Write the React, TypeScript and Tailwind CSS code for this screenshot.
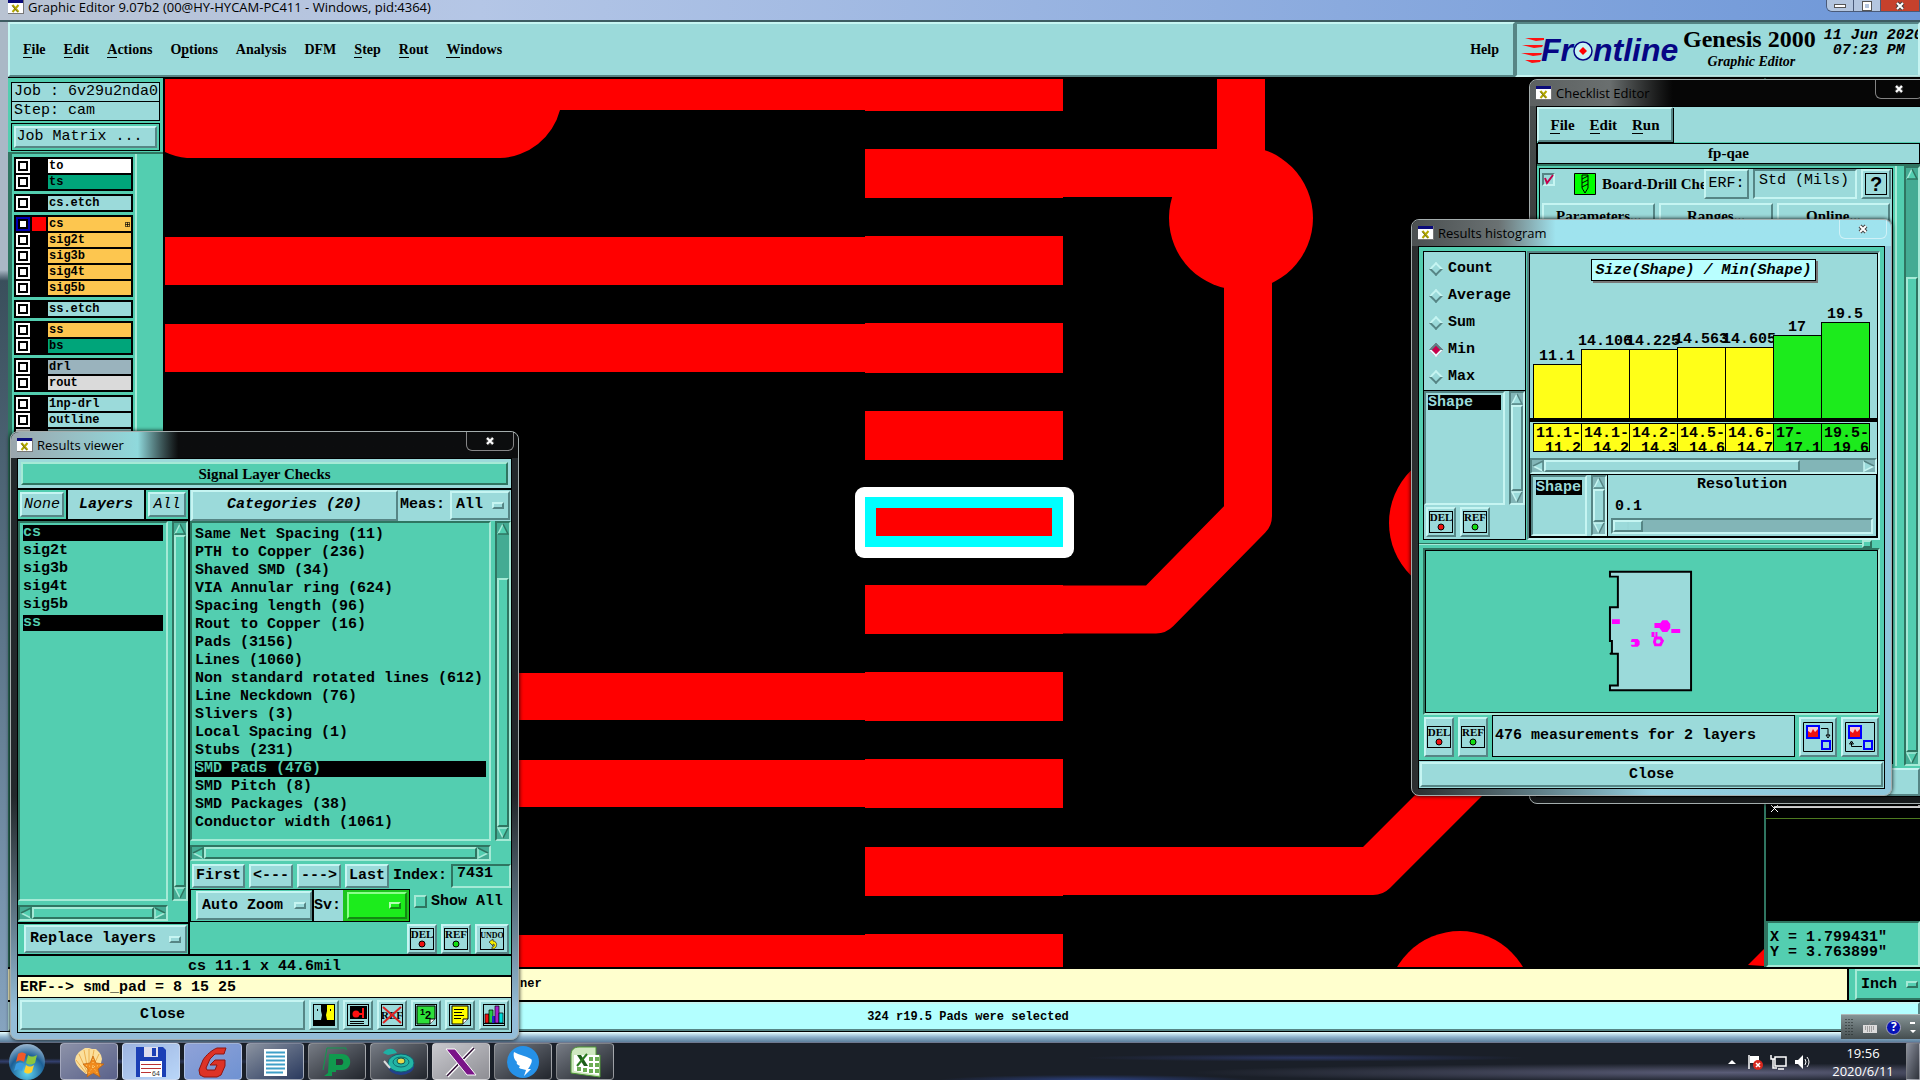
import type { ReactNode } from 'react'
import { clsx } from 'clsx'

const raised = 'border-2 border-t-[#c6f5f2] border-l-[#c6f5f2] border-r-[#568585] border-b-[#568585]'
const sunken = 'border-2 border-t-[#568585] border-l-[#568585] border-r-[#c6f5f2] border-b-[#c6f5f2]'
const raisedGreen = 'border-2 border-t-[#a5ead6] border-l-[#a5ead6] border-r-[#2f7561] border-b-[#2f7561]'
const sunkenGreen = 'border-2 border-t-[#2f7561] border-l-[#2f7561] border-r-[#a5ead6] border-b-[#a5ead6]'

const mono = "font-['Liberation_Mono',monospace] text-[15px] leading-[18px] font-bold"
const serif = "font-['Liberation_Serif',serif] text-[15px] leading-[18px] font-bold"
const ui = "font-['Open_Sans','Noto_Sans',sans-serif]"

const menus = [
  { label: 'File', key: 0 },
  { label: 'Edit', key: 0 },
  { label: 'Actions', key: 0 },
  { label: 'Options', key: 1 },
  { label: 'Analysis', key: -1 },
  { label: 'DFM', key: -1 },
  { label: 'Step', key: 0 },
  { label: 'Rout', key: 0 },
  { label: 'Windows', key: 0 }
]

const layerGroups = [
  [
    { name: 'to', color: 'bg-white' },
    { name: 'ts', color: 'bg-[#00a57a]' }
  ],
  [{ name: 'cs.etch', color: 'bg-[#9bdada]' }],
  [
    { name: 'cs', color: 'bg-[#fdc64f]', active: true },
    { name: 'sig2t', color: 'bg-[#fdc64f]' },
    { name: 'sig3b', color: 'bg-[#fdc64f]' },
    { name: 'sig4t', color: 'bg-[#fdc64f]' },
    { name: 'sig5b', color: 'bg-[#fdc64f]' }
  ],
  [{ name: 'ss.etch', color: 'bg-[#9bdada]' }],
  [
    { name: 'ss', color: 'bg-[#fdc64f]' },
    { name: 'bs', color: 'bg-[#00a57a]' }
  ],
  [
    { name: 'drl', color: 'bg-[#9ab3bd]' },
    { name: 'rout', color: 'bg-[#dadada]' }
  ],
  [
    { name: '1np-drl', color: 'bg-[#9bdada]' },
    { name: 'outline', color: 'bg-[#9bdada]' },
    { name: '', color: 'bg-[#9bdada]' }
  ]
]

const resultLayers = ['cs', 'sig2t', 'sig3b', 'sig4t', 'sig5b', 'ss']

const categories = [
  'Same Net Spacing (11)',
  'PTH to Copper (236)',
  'Shaved SMD (34)',
  'VIA Annular ring (624)',
  'Spacing length (96)',
  'Rout to Copper (16)',
  'Pads (3156)',
  'Lines (1060)',
  'Non standard rotated lines (612)',
  'Line Neckdown (76)',
  'Slivers (3)',
  'Local Spacing (1)',
  'Stubs (231)',
  'SMD Pads (476)',
  'SMD Pitch (8)',
  'SMD Packages (38)',
  'Conductor width (1061)'
]

const bars = [
  { value: '11.1', from: '11.1-', to: '11.2', height: 54, ok: false },
  { value: '14.106', from: '14.1-', to: '14.2', height: 69, ok: false },
  { value: '14.225', from: '14.2-', to: '14.3', height: 69, ok: false },
  { value: '14.563', from: '14.5-', to: '14.6', height: 71, ok: false },
  { value: '14.605', from: '14.6-', to: '14.7', height: 71, ok: false },
  { value: '17', from: '17-', to: '17.1', height: 83, ok: true },
  { value: '19.5', from: '19.5-', to: '19.6', height: 96, ok: true }
]

function MenuLabel({ label, hotkey }: { label: string; hotkey: number }) {
  if (hotkey < 0) return <>{label}</>
  return (
    <>
      {label.slice(0, hotkey)}
      <span className="border-b border-black">{label[hotkey]}</span>
      {label.slice(hotkey + 1)}
    </>
  )
}

function XIcon() {
  return (
    <svg viewBox="0 0 16 14" className="h-[14px] w-4 shrink-0" aria-hidden="true">
      <rect width="16" height="14" fill="#777" />
      <rect width="15" height="13" fill="#fff" />
      <rect width="15" height="3" fill="#0b0b7a" />
      <path d="M4.5 5l6 7M10.5 5l-6 7" stroke="#b3a800" strokeWidth="2" fill="none" />
      <path d="M4 5.500l5.5 6.5" stroke="#333" strokeWidth=".5" />
    </svg>
  )
}

function ScrollBar({
  horizontal,
  tone,
  before = 0,
  thumb = 1,
  after = 0
}: {
  horizontal?: boolean
  tone: 'green' | 'cyan'
  before?: number
  thumb?: number
  after?: number
}) {
  const green = tone === 'green'
  const fill = green ? '#53ceb0' : '#9bdada'
  const light = green ? '#a5ead6' : '#c6f5f2'
  const dark = green ? '#2f7561' : '#568585'
  const arrow = (end: boolean) => (
    <svg
      viewBox="0 0 12 12"
      className={clsx('h-3 w-3 shrink-0', horizontal && '-rotate-90')}
      aria-hidden="true"
    >
      {end ? (
        <>
          <path d="M1 1h10L6 11z" fill={fill} />
          <path d="M11 1H1l5 10" fill="none" stroke={light} strokeWidth="1.5" />
          <path d="M6 11 11 1" stroke={dark} strokeWidth="1.5" />
        </>
      ) : (
        <>
          <path d="M6 1 11 11H1z" fill={fill} />
          <path d="M6 1 1 11" stroke={light} strokeWidth="1.5" />
          <path d="M6 1l5 10H1" fill="none" stroke={dark} strokeWidth="1.5" />
        </>
      )}
    </svg>
  )
  return (
    <div
      className={clsx(
        'flex shrink-0 border-2',
        green ? 'bg-[#44ab93]' : 'bg-[#82b5b7]',
        green ? sunkenGreen : sunken,
        horizontal ? 'h-4 flex-row' : 'w-4 flex-col'
      )}
    >
      {arrow(false)}
      <div style={{ flexGrow: before }} />
      <div
        className={clsx(green ? 'bg-[#53ceb0]' : 'bg-[#9bdada]', green ? raisedGreen : raised)}
        style={{ flexGrow: thumb }}
      />
      <div style={{ flexGrow: after }} />
      {arrow(true)}
    </div>
  )
}

function OptionMenu({ label, value, className, green }: { label: string; value: string; className?: string; green?: boolean }) {
  return (
    <div className={clsx('relative flex items-center', green ? 'border-2' : raised, className)}>
      <select aria-label={label} className="h-full w-full appearance-none bg-transparent pl-1 outline-none">
        <option>{value}</option>
      </select>
      <span
        className={clsx(
          'pointer-events-none absolute right-1 h-[7px] w-3',
          green ? 'border-2 border-t-[#b5ffb5] border-l-[#b5ffb5] border-r-[#138a13] border-b-[#138a13]' : raised
        )}
      />
    </div>
  )
}

function BevelButton({ children, className, label }: { children: ReactNode; className?: string; label?: string }) {
  return (
    <button
      type="button"
      aria-label={label}
      className={clsx('flex items-center justify-center bg-[#9bdada] whitespace-nowrap', raised, className)}
    >
      {children}
    </button>
  )
}

function TagIcon({ text, dot }: { text: string; dot: string }) {
  const undo = text === 'UNDO'
  return (
    <svg viewBox="0 0 26 24" className="h-6 w-[26px] shrink-0" aria-hidden="true">
      <rect x="1.5" y="1.5" width="23" height="21" fill="none" stroke="#000" />
      <text x="13" y="11" textAnchor="middle" fontFamily="Liberation Serif, serif" fontSize={undo ? 8 : 11}>
        {text}
      </text>
      {undo ? (
        <>
          <path d="M10 15l4-3v2c5 0 5 8-1 8v-2c3 0 3-3 1-3v2z" fill="#f5ee00" stroke="#222" strokeWidth=".7" />
        </>
      ) : (
        <circle cx="13" cy="17" r="3" fill={dot} stroke="#000" />
      )}
    </svg>
  )
}

function CloseGlyph() {
  return (
    <svg viewBox="0 0 12 10" className="h-[10px] w-3" aria-hidden="true">
      <path d="M3 2l6 6M9 2L3 8" stroke="#444" strokeWidth="4" />
      <path d="M3 2l6 6M9 2L3 8" stroke="#fff" strokeWidth="2" />
    </svg>
  )
}

function Header() {
  return (
    <header className="ml-2 flex h-14 shrink-0 border-b border-black bg-[#9bdada]">
      <nav
        className={clsx(
          "flex flex-1 items-center gap-[18px] pr-[14px] pl-[13px] font-['Liberation_Serif',serif] text-sm leading-4 font-bold",
          raised
        )}
      >
        {menus.map((m) => (
          <button key={m.label} type="button">
            <MenuLabel label={m.label} hotkey={m.key} />
          </button>
        ))}
        <button type="button" className="ml-auto">
          Help
        </button>
      </nav>
      <div className={clsx('flex w-[405px] overflow-hidden pl-1', sunken)}>
        <svg viewBox="0 0 162 52" className="h-[52px] w-[162px] shrink-0" role="img" aria-label="Frontline">
          <path d="M4 14h19v2l-8 1zM1 21h21l-1 2-8 1zM0 29h21l-1 2-8 1zM4 36h16l-1 2-8 1z" fill="#f11" />
          <g fill="#060684" fontFamily="Liberation Sans, sans-serif" fontSize="32" fontWeight="700" fontStyle="italic">
            <text x="20" y="37">Fr</text>
            <text x="72" y="37">ntline</text>
          </g>
          <circle cx="62" cy="27" r="9" fill="#c8f4f4" stroke="#060684" strokeWidth="1.5" />
          <path d="M62 23l4 4-4 4-4-4z" fill="#f00" />
        </svg>
        <div className="flex shrink-0 flex-col items-center font-['Liberation_Serif',serif] font-bold">
          <h1 className="text-[24px] leading-[30px]">Genesis 2000</h1>
          <p className="pl-1 text-sm leading-4 italic">Graphic Editor</p>
        </div>
        <div className={clsx('ml-2 shrink-0 pt-1 whitespace-pre italic', mono)}>
          <p className="leading-[15px]">11 Jun 2020</p>
          <p className="leading-[15px]"> 07:23 PM</p>
        </div>
      </div>
    </header>
  )
}

function LayerPanel() {
  return (
    <aside className="w-[157px] shrink-0 overflow-hidden border-r-2 border-black bg-[#53ceb0] pt-1">
      <div className="mx-[3px] font-['Liberation_Mono',monospace] text-[15px] leading-[18px] whitespace-pre">
        <p className="border border-black bg-[#9bdada] px-[2px]">Job : 6v29u2nda0</p>
        <p className="border border-t-0 border-black bg-[#9bdada] px-[2px]">Step: cam</p>
        <div className="mt-[2px] border border-black p-[2px]">
          <BevelButton className="h-[22px] w-full pr-3">Job Matrix ...</BevelButton>
        </div>
      </div>
      <div className="mt-[1px] flex h-full border-t-2 border-[#2f7561]">
        <ul className="w-[129px] space-y-[3px] border-r-2 border-l-4 border-r-[#a5ead6] border-l-[#2f7561] px-[2px] pt-[3px] font-['Liberation_Mono',monospace] text-xs leading-[14px] font-bold">
          {layerGroups.map((group, i) => (
            <li key={i} className="space-y-[2px] bg-black p-[2px]">
              {group.map((layer) => (
                <label key={layer.name} className="flex h-[14px] gap-[2px]">
                  <input
                    type="checkbox"
                    aria-label={layer.name || 'layer'}
                    className={clsx(
                      'size-[14px] appearance-none border-2 bg-white outline-2 -outline-offset-[4px] outline-black',
                      'active' in layer ? 'border-[#0000b4]' : 'border-white'
                    )}
                  />
                  <span className={clsx('w-[14px]', 'active' in layer && 'bg-[#f00]')} />
                  <span className={clsx('flex flex-1 items-center justify-between px-[1px]', layer.color)}>
                    {layer.name}
                    {'active' in layer && (
                      <svg viewBox="0 0 7 7" className="size-[5px]" aria-hidden="true">
                        <path d="M.5.5h6v6h-6zM3.5.5v6M.5 3.5h6" fill="none" stroke="#000" />
                      </svg>
                    )}
                  </span>
                </label>
              ))}
            </li>
          ))}
        </ul>
      </div>
    </aside>
  )
}

function BoardCanvas() {
  return (
    <svg
      viewBox="165 78 1599 889"
      preserveAspectRatio="xMinYMin slice"
      className="h-full min-w-0 flex-1 bg-black"
      role="img"
      aria-label="cs layer"
    >
      <g fill="#f00">
        <path d="M165 79h710v31H560a64 64 0 0 1-60 48H187a64 64 0 0 1-22-6z" />
        <path d="M865 79h198v32H865zM865 149h198v49H865zM865 236h198v49H865zM865 323h198v50H865zM865 411h198v49H865z" />
        <path d="M865 585h198v49H865zM865 672h198v49H865zM865 759h198v49H865zM865 847h198v49H865zM865 934h198v40H865z" />
        <path d="M165 237h710v48H165zM165 324h710v48H165zM165 673h710v47H165zM165 760h710v47H165zM165 935h710v40H165z" />
        <circle cx="1241" cy="218" r="72" />
        <circle cx="1463" cy="523" r="74" />
        <circle cx="1460" cy="1004" r="73" />
        <path d="M1748 965l16-16v17z" />
      </g>
      <g fill="none" stroke="#f00" strokeWidth="48" strokeLinejoin="round">
        <path d="M1053 173h188V79" />
        <path d="M1248 218v298l-92 93.5h-103" />
        <path d="M1053 871h320l160-160" />
      </g>
      <rect x="855" y="487" width="219" height="71" rx="9" fill="#fff" />
      <rect x="865" y="497" width="198" height="50" fill="#0ff" />
      <rect x="876" y="508" width="176" height="28" fill="#f00" />
    </svg>
  )
}

function GlassWindow({
  title,
  className,
  barClass,
  bodyClass,
  children
}: {
  title: string
  className: string
  barClass: string
  bodyClass?: string
  children: ReactNode
}) {
  return (
    <section
      aria-label={title}
      className={clsx(
        'absolute flex flex-col rounded-lg border border-[#a4adad] px-[6px] pb-[6px] shadow-[0_0_4px_#000]',
        className
      )}
    >
      <div className={clsx('-mx-[6px] flex h-[26px] shrink-0 items-center rounded-t-lg pl-[6px]', barClass)}>
        <XIcon />
        <h2 className={clsx('ml-1 text-[13px] leading-[18px]', ui)}>{title}</h2>
        <button
          type="button"
          aria-label={`Close ${title}`}
          className="mr-1 ml-auto flex h-[19px] w-12 items-center justify-center self-start rounded-b-md border border-t-0 border-white/50"
        >
          <CloseGlyph />
        </button>
      </div>
      <div className={clsx('flex min-h-0 flex-1 flex-col border border-black', bodyClass)}>{children}</div>
    </section>
  )
}

function ResultsViewer() {
  return (
    <GlassWindow
      title="Results viewer"
      className="top-[431px] left-[10px] h-[609px] w-[509px] bg-linear-to-b from-[#23282b] from-60% to-[#94bdd8] to-95%"
      barClass="bg-linear-to-r from-[#9aa6ad] via-[#8fd9dc] via-25% to-[#0c0d0e] to-33%"
      bodyClass={clsx('bg-[#53ceb0]', mono)}
    >
      <div className="h-[31px] shrink-0 border-b-2 border-black bg-[#9bdada] p-[3px]">
        <h3 className={clsx('flex h-full items-center justify-center bg-[#53ceb0]', serif, raisedGreen)}>
          Signal Layer Checks
        </h3>
      </div>
      <div className="flex min-h-0 flex-1">
        <div className="flex w-[172px] flex-col border-r-2 border-black">
          <div className="flex h-[31px] border-b-2 border-black">
            <div className="p-[2px]">
              <BevelButton className="h-full w-11 font-normal italic">None</BevelButton>
            </div>
            <div className="flex flex-1 items-center justify-center border-x-2 border-black bg-[#9bdada] italic">
              Layers
            </div>
            <div className="p-[2px]">
              <BevelButton className="h-full w-[38px] font-normal italic">All</BevelButton>
            </div>
          </div>
          <div className="flex min-h-0 flex-1 gap-1">
            <ul role="listbox" aria-label="Layers" className={clsx('flex-1 px-[3px]', sunkenGreen)}>
              {resultLayers.map((name, i) => {
                const on = i === 0 || i === 5
                return (
                  <li
                    key={name}
                    role="option"
                    aria-selected={on}
                    className={clsx('my-[2px] leading-4', on && 'bg-black text-[#53ceb0]')}
                  >
                    {name}
                  </li>
                )
              })}
            </ul>
            <ScrollBar tone="green" />
          </div>
          <div className="mt-1 mr-5 flex flex-col">
            <ScrollBar tone="green" horizontal />
          </div>
          <div className="mt-[1px] h-[34px] border-y-2 border-black p-[1px] pl-[6px]">
            <OptionMenu label="Layer mode" value="Replace layers" className="h-full bg-[#9bdada]" />
          </div>
        </div>

        <div className="flex min-w-0 flex-1 flex-col border-b-2 border-black">
          <div className="flex h-[31px] bg-[#9bdada] pl-[1px]">
            <BevelButton className="w-[207px] italic">Categories (20)</BevelButton>
            <span className="self-center pl-[2px]">Meas:</span>
            <OptionMenu label="Meas" value="All" className="m-[1px] ml-auto w-[60px]" />
          </div>
          <div className="flex h-[323px] gap-1">
            <ul role="listbox" aria-label="Categories" className={clsx('flex-1 px-[3px] py-[2px]', sunkenGreen)}>
              {categories.map((name) => {
                const on = name.startsWith('SMD Pads')
                return (
                  <li
                    key={name}
                    role="option"
                    aria-selected={on}
                    className={clsx('my-[2px] leading-4 whitespace-nowrap', on && 'bg-black text-[#53ceb0]')}
                  >
                    {name}
                  </li>
                )
              })}
            </ul>
            <ScrollBar tone="green" before={45} thumb={255} />
          </div>
          <div className="mt-1 mr-5 flex flex-col">
            <ScrollBar tone="green" horizontal />
          </div>
          <div className="mt-[3px] flex h-6 gap-1 pl-[2px]">
            <BevelButton className="w-[53px]">First</BevelButton>
            <BevelButton className="w-11">{'<---'}</BevelButton>
            <BevelButton className="w-11">{'--->'}</BevelButton>
            <BevelButton className="w-11">Last</BevelButton>
            <label htmlFor="index" className="self-center">
              Index:
            </label>
            <input
              id="index"
              defaultValue="7431"
              className={clsx('min-w-0 flex-1 bg-transparent pb-1 pl-1', sunkenGreen)}
            />
          </div>
          <div className="mt-[1px] flex h-[33px] items-center">
            <div className="flex h-full border border-black">
              <OptionMenu label="Zoom" value="Auto Zoom" className="my-[1px] ml-[5px] w-[116px] bg-[#9bdada]" />
              <span className="flex items-center border-l-2 border-black bg-[#9bdada] pr-[2px]">Sv:</span>
              <div className="bg-[#1cc51c] p-[2px] pl-1">
                <OptionMenu
                  label="Severity"
                  value=""
                  green
                  className="h-full w-[60px] border-t-[#8aff8a] border-r-[#138a13] border-b-[#138a13] border-l-[#8aff8a] bg-[#1cec1c]"
                />
              </div>
            </div>
            <label className="mb-2 ml-1 flex items-center gap-1">
              <input type="checkbox" className={clsx('size-[13px] appearance-none', raisedGreen)} />
              Show All
            </label>
          </div>
          <div className="mt-[2px] mr-[2px] flex h-[30px] justify-end gap-1">
            <BevelButton label="Delete" className="w-[30px]">
              <TagIcon text="DEL" dot="#e11" />
            </BevelButton>
            <BevelButton label="Reference" className="w-[30px]">
              <TagIcon text="REF" dot="#1d1" />
            </BevelButton>
            <BevelButton label="Undo" className="w-[34px]">
              <TagIcon text="UNDO" dot="#ee0" />
            </BevelButton>
          </div>
        </div>
      </div>
      <p className="h-[21px] shrink-0 border-b-2 border-black text-center leading-[21px]">cs 11.1 x 44.6mil</p>
      <p className="h-[21px] shrink-0 border-b border-black bg-[#ffffce] pl-[2px] leading-[21px] whitespace-pre">
        {'ERF--> smd_pad = 8 15 25'}
      </p>
      <div className="flex h-[34px] shrink-0 gap-1 bg-[#9bdada] p-[2px]">
        <BevelButton className="flex-1">Close</BevelButton>
        {tools.map((tool) => (
          <BevelButton key={tool.name} label={tool.name} className="w-[30px]">
            <svg viewBox="0 0 24 24" className="size-6 shrink-0" aria-hidden="true">
              {tool.art}
              <rect x="1.5" y="1.5" width="21" height="21" fill="none" stroke="#000" />
            </svg>
          </BevelButton>
        ))}
      </div>
    </GlassWindow>
  )
}

const tools = [
  {
    name: 'Contrast',
    art: (
      <>
        <path d="M12 2h10v15H12z" fill="#ff0" />
        <path d="M2 17h7l1-5-1-4V2h6v6l-1 4 1 5h7v5H2z" />
        <path d="M5 6h1v2H5zM18 6h1v2h-1z" />
      </>
    )
  },
  {
    name: 'Snapshot',
    art: (
      <>
        <path d="M4 3h17v13H4zM4 18h14v1H4zM4 20h14v1H4z" />
        <circle cx="10" cy="11" r="3.5" fill="#f11" />
        <path d="M12 10h4V5h2v10h-2v-3h-4z" fill="#f11" />
      </>
    )
  },
  {
    name: 'Clear reference',
    art: (
      <>
        <text x="12" y="16" textAnchor="middle" fontFamily="Liberation Serif, serif" fontSize="11">
          REF
        </text>
        <path d="M3 4l18 16M21 4L3 20" stroke="#d22" strokeWidth="2" />
      </>
    )
  },
  {
    name: 'Count',
    art: (
      <>
        <path d="M3 3h18v13l-5 5H3z" fill="#2de03a" stroke="#000" />
        <path d="M16 21v-5h5" fill="#fff" stroke="#000" />
        <text x="6" y="12" fontFamily="Liberation Sans, sans-serif" fontSize="9" fontWeight="700">
          1
        </text>
        <text x="11" y="16" fontFamily="Liberation Sans, sans-serif" fontSize="11" fontWeight="700">
          2
        </text>
      </>
    )
  },
  {
    name: 'Notes',
    art: (
      <>
        <path d="M4 3h16v13l-5 5H4z" fill="#ff0" stroke="#000" />
        <path d="M15 21v-5h5" fill="#fff" stroke="#000" />
        <path d="M6 6.500h10M6 9.500h8M6 12.500h10M6 15.500h7" stroke="#000" />
      </>
    )
  },
  {
    name: 'Histogram',
    art: (
      <>
        <path d="M3 11h4v9H3z" fill="#e11" stroke="#000" strokeWidth=".7" />
        <path d="M7 7h4v13H7z" fill="#2c4" stroke="#000" strokeWidth=".7" />
        <path d="M10 13h3v7h-3z" fill="#22c" />
        <path d="M13 3h4v17h-4z" fill="#a2c" stroke="#000" strokeWidth=".7" />
        <path d="M17 10h4v10h-4z" fill="#0dd" stroke="#000" strokeWidth=".7" />
        <path d="M2 20.500h20" stroke="#000" />
      </>
    )
  }
]

function ChecklistEditor() {
  return (
    <GlassWindow
      title="Checklist Editor"
      className="top-[79px] left-[1529px] h-[725px] w-[399px] bg-linear-to-b from-[#4d5353] via-[#222] to-[#16191a]"
      barClass="bg-linear-to-r from-[#5c6161] via-[#6a6f6f] via-20% to-[#060606] to-36%"
      bodyClass="bg-[#53ceb0]"
    >
      <div className="flex h-[35px] shrink-0 bg-[#9bdada]">
        <nav className={clsx('flex w-[136px] items-center justify-around px-1 shadow-[1px_1px_0_#000]', serif, raised)}>
          {['File', 'Edit', 'Run'].map((label) => (
            <button key={label} type="button">
              <MenuLabel label={label} hotkey={0} />
            </button>
          ))}
        </nav>
      </div>
      <p className={clsx('mt-[1px] h-[21px] shrink-0 border border-black bg-[#9bdada] text-center', serif)}>fp-qae</p>
      <div className="flex min-h-0 flex-1 border-t-2 border-[#2f7561]">
        <div className="my-[2px] ml-[2px] flex w-[356px] flex-col border border-black bg-[#9bdada]">
          <div className="flex h-[30px] items-center pl-[2px]">
            <input
              type="checkbox"
              aria-label="Board-Drill"
              defaultChecked
              className={clsx('mt-1 size-[13px] appearance-none self-start', sunken)}
            />
            <svg viewBox="0 0 13 13" className="mt-1 -ml-[13px] size-[13px] self-start" aria-hidden="true">
              <path d="M3 5l2 5 6-8" fill="none" stroke="#c3004b" strokeWidth="2" />
            </svg>
            <svg viewBox="0 0 22 22" className="mr-[6px] ml-[19px] size-[22px] shrink-0" aria-hidden="true">
              <path d="M.5.5h21v21H.5z" fill="#0f0" stroke="#000" />
              <path d="M8 2h6v13l-3 5-3-5zM8 6l6-3M8 10l6-3M8 14l6-3" fill="none" stroke="#000" />
            </svg>
            <span className={clsx('w-[102px] overflow-hidden whitespace-nowrap', serif)}>Board-Drill Che</span>
            <BevelButton className="h-full w-[45px] font-['Liberation_Mono',monospace] text-[15px]">ERF:</BevelButton>
            <input
              aria-label="ERF"
              defaultValue="Std (Mils)"
              className={clsx(
                "mx-1 h-full w-[104px] bg-transparent pb-2 pl-1 font-['Liberation_Mono',monospace] text-[15px]",
                sunken
              )}
            />
            <BevelButton label="Help" className="h-full w-[30px]">
              <span className="flex size-[22px] items-center justify-center border border-black font-['Liberation_Sans',sans-serif] text-xl font-bold">
                ?
              </span>
            </BevelButton>
          </div>
          <div className="mt-1 grid grid-cols-3 gap-1 px-[2px]">
            {['Parameters...', 'Ranges...', 'Online...'].map((label) => (
              <BevelButton key={label} className={clsx('h-[26px]', serif)}>
                {label}
              </BevelButton>
            ))}
          </div>
        </div>
        <div className="mr-[7px] w-1 border-r-2 border-[#a5ead6]" />
        <ScrollBar tone="green" before={98} thumb={475} />
      </div>
      <BevelButton label="Close" className="mt-[2px] h-7 w-full shrink-0">
        {''}
      </BevelButton>
    </GlassWindow>
  )
}

function Histogram() {
  return (
    <div className="bg-[#9bdada]">
      <div className="flex h-16 flex-col items-center pt-[5px]">
        <p className="border border-black bg-[#b9ffff] px-[3px] pt-[2px] italic shadow-[2px_2px_0_#777]">
          Size(Shape) / Min(Shape)
        </p>
      </div>
      <div className="flex h-[100px] items-end px-[3px]">
        {bars.map((bar) => (
          <div key={bar.value} className="flex w-12 flex-col items-center">
            <span className="leading-[15px]">{bar.value}</span>
            <div
              className={clsx(
                'w-[49px] self-start border border-b-0 border-black',
                bar.ok ? 'bg-[#1ceb1c]' : 'bg-[#ffff18]'
              )}
              style={{ height: bar.height }}
            />
          </div>
        ))}
      </div>
      <div className="h-1 bg-black" />
      <div className="flex h-9 px-[3px] pt-[1px]">
        {bars.map((bar) => (
          <div key={bar.from} className="w-12">
            <div
              className={clsx(
                'flex h-[29px] w-[49px] flex-col border border-black pt-[2px] leading-[15px]',
                bar.ok ? 'bg-[#1ceb1c]' : 'bg-[#ffff18]'
              )}
            >
              <span className="pl-[2px]">{bar.from}</span>
              <span className="text-right">{bar.to}</span>
            </div>
          </div>
        ))}
      </div>
    </div>
  )
}

function BoardMap() {
  return (
    <svg viewBox="0 0 456 163" className="h-[163px] w-full" role="img" aria-label="Board map">
      <path
        d="M186 20h82v120h-82v-5h8v-32h-8l2-1V90h-2V56h8V25h-8z"
        fill="#9bdada"
        stroke="#000"
        strokeWidth="2"
      />
      <g fill="#f0f">
        <path d="M188 68h8v5h-8zM231 72h6l2-3h5l3 4v4l-3 4h-5l-3-4h-5zM248 78h9v4h-9zM228 81h3v5h-3zM232 81h2v5h-2z" />
        <path d="M208 88h6l2 2v4l-2 2h-6l-1-2h4v-3h-4z" />
      </g>
      <path d="M232 87h5l2 3-2 4h-5l-1-3z" fill="none" stroke="#f0f" strokeWidth="3" />
    </svg>
  )
}

function TransferIcon({ back }: { back?: boolean }) {
  return (
    <svg viewBox="0 0 30 30" className="size-[30px] shrink-0" aria-hidden="true">
      <path d="M.5.5h29v29H.5z" fill="none" stroke="#000" />
      <path d="M4 4h12v12H4z" fill="#f8c8d0" stroke="#00f" strokeWidth="2" />
      <path d="M5 15V9l3 2 2-4 2 3 3-3v8z" fill="#e11" />
      <path d="M19 19h8v8h-8z" fill="none" stroke="#00f" strokeWidth="2" />
      {back ? (
        <path d="M17 24.500H6.500v-4M4.500 22l2-3 2 3z" fill="none" stroke="#000" />
      ) : (
        <path d="M18 6.500h7v7M23 13l2 3 2-3z" fill="none" stroke="#000" />
      )}
    </svg>
  )
}

function ResultsHistogram() {
  return (
    <GlassWindow
      title="Results histogram"
      className="top-[219px] left-[1411px] h-[577px] w-[481px] bg-linear-to-r from-[#2a2d2e] via-[#93cfe0] to-[#8fc7dc]"
      barClass="bg-linear-to-r from-[#4b5051] via-[#6a7172] via-18% to-[#9fe3ee] to-30%"
      bodyClass={clsx('bg-[#53ceb0]', mono)}
    >
      <div className="mx-1 mt-1 flex h-[289px] shrink-0">
        <div className="flex w-[103px] flex-col border border-black bg-[#9bdada]">
          <fieldset className="h-[139px] border-b border-black pt-[3px] pl-[7px]">
            {['Count', 'Average', 'Sum', 'Min', 'Max'].map((name) => (
              <label key={name} className="flex h-[27px] items-center gap-[7px]">
                <input
                  type="radio"
                  name="statistic"
                  defaultChecked={name === 'Min'}
                  className="size-[10px] rotate-45 appearance-none border-2 border-t-[#c6f5f2] border-r-[#568585] border-b-[#568585] border-l-[#c6f5f2] checked:border-t-[#568585] checked:border-r-[#e5ffff] checked:border-b-[#e5ffff] checked:border-l-[#568585] checked:bg-[#c8004b]"
                />
                {name}
              </label>
            ))}
          </fieldset>
          <div className="flex h-[114px]">
            <ul role="listbox" aria-label="Measures" className={clsx('mr-1 flex-1 p-[2px]', sunken)}>
              <li role="option" aria-selected="true" className="bg-black leading-[15px] text-[#9bdada]">
                Shape
              </li>
            </ul>
            <ScrollBar tone="cyan" />
          </div>
          <div className="flex flex-1 gap-1 p-[2px]">
            <BevelButton label="Delete" className="w-[30px]">
              <TagIcon text="DEL" dot="#e11" />
            </BevelButton>
            <BevelButton label="Reference" className="w-[30px]">
              <TagIcon text="REF" dot="#1d1" />
            </BevelButton>
          </div>
        </div>
        <div className={clsx('ml-[1px] flex min-w-0 flex-1 flex-col', sunken)}>
          <div className="border border-black">
            <Histogram />
            <ScrollBar tone="cyan" horizontal thumb={258} after={65} />
          </div>
          <div className="flex min-h-0 flex-1 border-2 border-t-0 border-black bg-[#9bdada]">
            <ul role="listbox" aria-label="Attributes" className={clsx('mr-1 w-[56px] p-[3px]', sunken)}>
              <li role="option" aria-selected="true" className="bg-black leading-[15px] text-[#9bdada]">
                Shape
              </li>
            </ul>
            <ScrollBar tone="cyan" />
            <div className="flex flex-1 flex-col border-l border-black px-[3px] pt-[1px] pb-[2px]">
              <label htmlFor="resolution" className="text-center">
                Resolution
              </label>
              <output className="mt-1 pl-1">0.1</output>
              <input
                id="resolution"
                type="range"
                min={0}
                max={10}
                defaultValue={0}
                className={clsx(
                  'mt-auto h-4 w-full appearance-none bg-[#82b5b7] [&::-webkit-slider-thumb]:h-3 [&::-webkit-slider-thumb]:w-[30px] [&::-webkit-slider-thumb]:appearance-none [&::-webkit-slider-thumb]:border-2 [&::-webkit-slider-thumb]:border-t-[#c6f5f2] [&::-webkit-slider-thumb]:border-r-[#568585] [&::-webkit-slider-thumb]:border-b-[#568585] [&::-webkit-slider-thumb]:border-l-[#c6f5f2] [&::-webkit-slider-thumb]:bg-linear-to-r [&::-webkit-slider-thumb]:from-[#9bdada] [&::-webkit-slider-thumb]:from-48% [&::-webkit-slider-thumb]:via-[#568585] [&::-webkit-slider-thumb]:via-50% [&::-webkit-slider-thumb]:to-[#9bdada] [&::-webkit-slider-thumb]:to-52%',
                  sunken
                )}
              />
            </div>
          </div>
        </div>
      </div>
      <div className="flex h-2 shrink-0 items-center">
        <div className="h-[2px] flex-1 border-t border-b border-t-[#2f7561] border-b-[#a5ead6]" />
        <div className={clsx('mr-3 h-2 w-[10px]', raisedGreen)} />
      </div>
      <div className={clsx('mx-1 min-h-0 flex-1', sunkenGreen)}>
        <div className="h-full overflow-hidden border border-black">
          <BoardMap />
        </div>
      </div>
      <div className="mx-[5px] flex h-[45px] shrink-0 gap-1 pb-[3px]">
        <BevelButton label="Delete" className="mt-[2px] w-[30px]">
          <TagIcon text="DEL" dot="#e11" />
        </BevelButton>
        <BevelButton label="Reference" className="mt-[2px] w-[30px]">
          <TagIcon text="REF" dot="#1d1" />
        </BevelButton>
        <p className="flex flex-1 items-center border border-black bg-[#9bdada] pl-[2px] whitespace-nowrap">
          476 measurements for 2 layers
        </p>
        <BevelButton label="Copy down" className="mt-[2px] w-[38px]">
          <TransferIcon />
        </BevelButton>
        <BevelButton label="Copy up" className="mt-[2px] w-[38px]">
          <TransferIcon back />
        </BevelButton>
      </div>
      <div className="h-7 shrink-0 border-t border-black bg-[#9bdada] p-[1px]">
        <BevelButton className="h-full w-full">Close</BevelButton>
      </div>
    </GlassWindow>
  )
}

const tasks = [
  {
    name: 'Shell',
    bg: 'from-[#8d92a8] to-[#59618a]',
    art: (
      <>
        <path d="M16 2l3 1 4 0 3 3 2 3 1 4-1 4-3 5-6 6h-6C8 24 3 20 2 14l1-4 3-4 3-2 3-2z" fill="#fbdf9c" />
        <path
          d="M16 3v22M11 4l4 21M21 4l-4 21M6 8l8 18M26 8l-8 17M3 14l10 13"
          stroke="#e8a33c"
          strokeWidth=".8"
          fill="none"
        />
        <path d="M20 10l3 7 8 1-6 5 2 8-7-4-6 4 1-8-5-5 7-1z" fill="#f08a1c" stroke="#b85c08" strokeWidth=".6" />
        <path d="M20 13v8l8-2M20 21l5 7M20 21l-5 7M20 21l-8-2" fill="none" stroke="#ffd27a" strokeDasharray="1 2" />
      </>
    )
  },
  {
    name: 'Floppy',
    bg: 'from-[#9db4e0] to-[#b9d6f8]',
    art: (
      <>
        <path d="M1 1h27l3 3v27H1z" fill="#1b3fb5" />
        <path d="M9 1h14v10H9z" fill="#dde" />
        <path d="M17 2h4v8h-4z" fill="#1b3fb5" />
        <path d="M5 15h22v16H5z" fill="#fff" />
        <path d="M6 18.500h20M6 22.500h20M6 26.500h10" stroke="#b33" />
        <text x="17" y="30" fontFamily="Liberation Sans, sans-serif" fontSize="7" fill="#333">
          64
        </text>
      </>
    )
  },
  {
    name: 'Genesis',
    bg: 'from-[#8fa2d8] to-[#6f92d2]',
    art: (
      <path
        d="M29 2h-9C15 4 9 9 6 14L2 24l1 5 4 2h13l4-2 4-9v-6h-10l-5 5h7l-2 5h-8l-1-2 4-9 5-5h9z"
        fill="#dd3226"
        stroke="#8f1410"
      />
    )
  },
  {
    name: 'Notepad',
    bg: 'from-[#8b93a0] to-[#2b3a5e]',
    art: (
      <>
        <path d="M5 3h23v27H5z" fill="#fff" />
        <path d="M7 6.500h19M7 10.500h19M7 14.500h19M7 18.500h19M7 22.500h19M7 26.500h17" stroke="#3f9fc8" strokeWidth="2" />
      </>
    )
  },
  {
    name: 'Plotter',
    bg: 'from-[#777c85] to-[#22262d]',
    art: (
      <>
        <path d="M8 8h13c11 0 11 16 0 16h-6v2h-4v4H3l4-3z" fill="#109a4e" />
        <path d="M15 13h5c3 0 3 6 0 6h-5z" fill="#30343a" />
        <path d="M2 24L6 2h19v2" fill="none" stroke="#109a4e" />
      </>
    )
  },
  {
    name: 'Viewer',
    bg: 'from-[#777c85] to-[#22262d]',
    art: (
      <>
        <path d="M0 7c4-6 12-5 14 0L5 9z" fill="#1fb0a4" />
        <ellipse cx="18" cy="20" rx="13" ry="9" fill="#22408c" />
        <ellipse cx="18" cy="17" rx="13" ry="9" fill="#23b5a5" stroke="#126070" />
        <ellipse cx="18" cy="16" rx="8" ry="5" fill="none" stroke="#0d6b70" />
        <ellipse cx="18" cy="15" rx="4" ry="3" fill="#e5d94c" stroke="#0a5550" />
        <path d="M1 15l6 7" stroke="#ddd" strokeWidth="2" />
      </>
    )
  },
  {
    name: 'Exceed',
    bg: 'from-[#c9c9ce] to-[#8e8e94]',
    art: (
      <>
        <path d="M29 2L2 30" stroke="#fff" strokeWidth="4" />
        <path d="M29 2L2 30" stroke="#2a0a30" strokeWidth="1.5" />
        <path d="M1 3h9l21 26h-9z" fill="#7a1488" stroke="#fff" />
      </>
    )
  },
  {
    name: 'DingTalk',
    bg: 'from-[#777c85] to-[#22262d]',
    art: (
      <>
        <circle cx="16" cy="16" r="16" fill="#2591e8" />
        <path d="M7 6c5 3 12 4 17 7 2 1 0 6-3 10h3l-7 7 2-6-4-1c-4-1-3-2-2-3-3-1-4-3-3-4-3-2-4-7-3-10z" fill="#fff" />
      </>
    )
  },
  {
    name: 'Excel',
    bg: 'from-[#777c85] to-[#22262d]',
    art: (
      <>
        <path d="M2 9c0-5 3-8 8-8h17v8h4v22l-29-4z" fill="#cfe8c0" stroke="#4f9a35" />
        <path d="M5 9h25v20L5 25z" fill="#fff" />
        <path d="M20 11h4v4h-4zM26 11h4v4h-4zM20 17h4v4h-4zM26 17h4v4h-4zM8 21h4v4H8zM14 22h4v4h-4zM20 23h4v4h-4zM26 23h4v4h-4z" fill="#6aac52" />
        <path d="M8 9h4l7 11h-4z" fill="#1d5c1a" />
        <path d="M18 8L8 20" stroke="#2a7a20" strokeWidth="2" />
      </>
    )
  }
]

function Taskbar() {
  return (
    <footer
      className={clsx(
        'relative flex h-[38px] shrink-0 items-stretch gap-1 border-t border-[#6d7890] bg-[#1a1f28] bg-[radial-gradient(ellipse_at_2%_50%,#33406f,transparent_12%),radial-gradient(ellipse_at_57%_100%,#2c4180,transparent_10%),radial-gradient(ellipse_at_68%_40%,#2a3560,transparent_12%),radial-gradient(ellipse_at_90%_80%,#5b5d78,transparent_22%)] pl-2 text-white',
        ui
      )}
    >
      <button type="button" aria-label="Start" className="mr-[10px]">
        <svg viewBox="0 0 38 38" className="size-[38px]" aria-hidden="true">
          <defs>
            <radialGradient id="orb" cx=".5" cy=".8" r=".8">
              <stop offset="0" stopColor="#5fd8f5" />
              <stop offset=".6" stopColor="#1c5f96" />
              <stop offset="1" stopColor="#9cb8d0" />
            </radialGradient>
          </defs>
          <circle cx="19" cy="19" r="18" fill="url(#orb)" />
          <path d="M10 11c3-2 5-2 8 0l-2 8c-3-2-5-2-8 0z" fill="#f0592a" />
          <path d="M20 12c3 2 5 2 9 0l-2 8c-4 2-6 2-9 0z" fill="#8cc63e" />
          <path d="M8 21c3-2 5-2 8 0l-2 7c-3-2-5-2-8 0z" fill="#3a9be0" />
          <path d="M18 22c3 2 5 2 8 0l-2 7c-3 2-5 2-8 0z" fill="#fdd02e" />
        </svg>
      </button>
      {tasks.map((task) => (
        <button
          key={task.name}
          type="button"
          aria-label={task.name}
          className={clsx(
            'flex w-[58px] items-center justify-center rounded-sm border border-white/40 bg-linear-to-br',
            task.bg
          )}
        >
          <svg viewBox="0 0 32 32" className="size-8" aria-hidden="true">
            {task.art}
          </svg>
        </button>
      ))}
      <div className="ml-auto flex items-center gap-[10px]">
        <svg viewBox="0 0 84 20" className="h-5 w-[84px]" aria-hidden="true">
          <path d="M0 12l4-4 4 4z" fill="#fff" />
          <path d="M21 3v14" stroke="#fff" strokeWidth="1.5" />
          <path d="M22 4h9v7h-9z" fill="#fff" />
          <circle cx="30" cy="13" r="5" fill="#d8281e" />
          <path d="M28 11l4 4M32 11l-4 4" stroke="#fff" strokeWidth="1.5" />
          <path d="M47 5h11v9H47zM50 17h6M43 3v4h4M45 7v9h4" fill="none" stroke="#fff" strokeWidth="1.5" />
          <path d="M67 8h3l5-5v14l-5-5h-3z" fill="#fff" />
          <path d="M77 7q2 3 0 6M79 5q4 5 0 10" fill="none" stroke="#fff" />
        </svg>
        <div className="mr-[-8px] w-[82px] text-center text-[13px] leading-[18px]">
          <p>19:56</p>
          <p>2020/6/11</p>
        </div>
        <button
          type="button"
          aria-label="Show desktop"
          className="h-full w-[14px] border border-white/30 bg-linear-to-br from-[#8a8f9c] to-[#30343c]"
        />
      </div>
      <div className="absolute right-0 bottom-[41px] flex h-[25px] w-[79px] items-center justify-between border-t border-[#b0b8b8] bg-linear-to-b from-[#869496] to-[#454e50] px-1">
        <svg viewBox="0 0 8 16" className="h-4 w-2" aria-hidden="true">
          <path d="M1 0v16M4 0v16M7 0v16" stroke="#1c2222" strokeDasharray="1 2" />
        </svg>
        <svg viewBox="0 0 16 14" className="h-[14px] w-4" aria-hidden="true">
          <path d="M1 5h14v8H1z" fill="#ddd" />
          <path d="M3 7h10M3 9h10M5 11h6" stroke="#666" strokeDasharray="1 1" />
          <path d="M7 5q1-4 6-4" fill="none" stroke="#888" />
        </svg>
        <span className="flex size-[15px] items-center justify-center rounded-full border border-[#aab] bg-[#0712b8] text-xs leading-3 font-bold">
          ?
        </span>
        <svg viewBox="0 0 6 14" className="h-[14px] w-[6px]" aria-hidden="true">
          <path d="M0 2h5v2H0zM0 10h6l-3 3z" fill="#fff" />
        </svg>
      </div>
    </footer>
  )
}

export default function App() {
  return (
    <div className="relative flex h-screen flex-col overflow-hidden bg-linear-to-b from-[#aab8c6] from-25% via-[#3a4f5c] via-26% to-[#8ba9c6] text-black">
      <div className="flex h-[22px] shrink-0 items-start border-b-2 border-[#3d5c62] bg-linear-to-r from-[#b9c3d2] via-[#b4c6e6] via-25% to-[#6e97d8] pl-2">
        <XIcon />
        <p className={clsx('ml-1 text-[13px] leading-[14px]', ui)}>
          Graphic Editor 9.07b2 (00@HY-HYCAM-PC411 - Windows, pid:4364)
        </p>
        <div className="ml-auto flex h-3 w-[94px] overflow-hidden rounded-bl-md border border-t-0 border-[#4a5a78]">
          <button type="button" aria-label="Minimize" className="flex-1 bg-[#b4c6df]">
            <span className="mx-auto block h-1 w-3 border border-[#555] bg-white" />
          </button>
          <button type="button" aria-label="Maximize" className="flex-1 border-x border-[#4a5a78] bg-[#b4c6df]">
            <span className="mx-auto block size-2 border-2 border-white outline outline-[#555]" />
          </button>
          <button type="button" aria-label="Close" className="flex w-[38px] items-center justify-center bg-[#c6412c]">
            <CloseGlyph />
          </button>
        </div>
      </div>
      <Header />
      <main className="ml-2 flex min-h-0 flex-1">
        <LayerPanel />
        <BoardCanvas />
        <div className="flex w-[156px] shrink-0 flex-col border-l-2 border-[#2f7561] bg-black">
          <div className="h-[741px] border-b border-[#4d7a20] pt-[727px]">
            <svg viewBox="0 0 154 8" className="h-2 w-[154px]" aria-hidden="true">
              <path d="M8 2h145M153 0v3" stroke="#ddd" strokeWidth="2" fill="none" />
              <path d="M5 0l7 7M12 0l-7 7" stroke="#fff" />
            </svg>
          </div>
          <div className={clsx('mt-auto h-[46px] bg-[#53ceb0] pt-[7px] pl-[2px] whitespace-pre', mono, sunkenGreen)}>
            <p className="leading-[15px]">X = 1.799431"</p>
            <p className="leading-[15px]">Y = 3.763899"</p>
          </div>
        </div>
      </main>
      <div className="ml-2 flex h-[35px] shrink-0 border-y-2 border-black">
        <p className="flex flex-1 items-center bg-[#ffffce] pb-[1px] pl-[512px] font-['Liberation_Mono',monospace] text-xs font-bold">
          ner
        </p>
        <div className={clsx('w-[73px] border-l-2 border-black bg-[#53ceb0] pl-[6px]', mono)}>
          <div className={clsx('flex h-full w-[76px] items-center gap-2 pl-1', raisedGreen)}>
            <label htmlFor="units" className="sr-only">
              Units
            </label>
            <select id="units" className="appearance-none bg-transparent outline-none">
              <option>Inch</option>
            </select>
            <span className={clsx('h-[7px] w-3 shrink-0', raisedGreen)} />
          </div>
        </div>
      </div>
      <p
        className={clsx(
          "ml-2 flex h-[29px] shrink-0 items-center justify-center bg-[#b3ffff] pl-2 font-['Liberation_Mono',monospace] text-xs font-bold",
          raised
        )}
      >
        324 r19.5 Pads were selected
      </p>
      <div className="h-[11px] shrink-0 border-t border-black bg-linear-to-b from-[#e8ffff] via-[#8fb3cd] to-[#5d7f9c]" />
      <Taskbar />
      <ChecklistEditor />
      <ResultsHistogram />
      <ResultsViewer />
    </div>
  )
}
